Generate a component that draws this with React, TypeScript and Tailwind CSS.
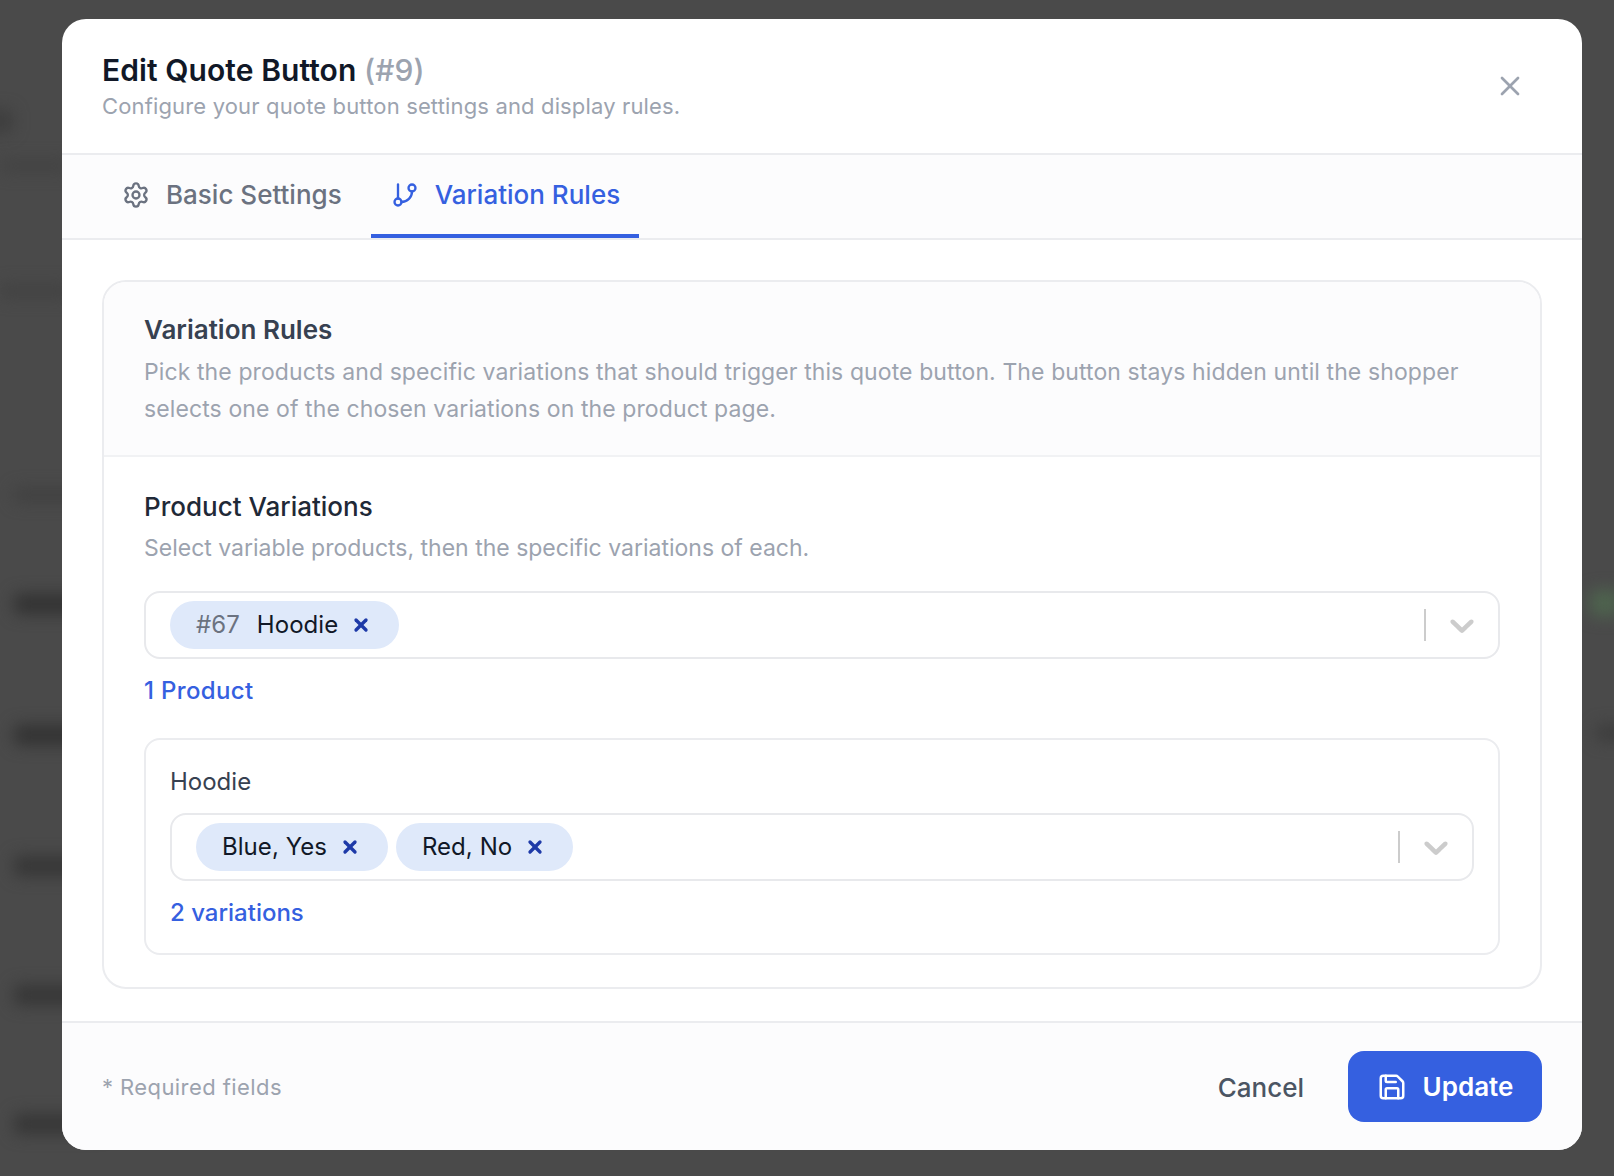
import { Settings, GitBranch, X, Save } from "lucide-react";

function Chevron() {
  return (
    <svg width="40" height="40" viewBox="0 0 20 20" fill="#cccccc" className="mx-[16px]">
      <path d="M4.516 7.548c0.436-0.446 1.043-0.481 1.576 0l3.908 3.747 3.908-3.747c0.533-0.481 1.141-0.446 1.574 0 0.436 0.445 0.408 1.197 0 1.615-0.406 0.418-4.695 4.502-4.695 4.502-0.217 0.223-0.502 0.335-0.787 0.335s-0.57-0.112-0.789-0.335c0 0-4.287-4.084-4.695-4.502s-0.436-1.17 0-1.615z" />
    </svg>
  );
}

function Tag({ children }: { children: React.ReactNode }) {
  return (
    <span className="flex h-[48px] items-center gap-[13px] rounded-full bg-[#dfe9fa] pl-[26px] pr-[28px] text-[24px] tracking-[0.05px] text-[#111827]">
      <span className="flex items-center gap-[17px]">{children}</span>
      <X size={20} strokeWidth={4} color="#1e3aa8" />
    </span>
  );
}

function MultiSelect({ children }: { children: React.ReactNode }) {
  return (
    <div className="flex h-[68px] items-center rounded-[16px] border-2 border-[#e8e9ec] bg-white pl-[24px]">
      <div className="flex flex-1 items-center gap-[8px]">{children}</div>
      <div className="h-[32px] w-[2px] bg-[#cccccc]" />
      <Chevron />
    </div>
  );
}

const streaks: string[] = [
  "top-[488px] left-[14px] w-[90px] h-[14px] bg-[#404040]",
  "top-[594px] left-[14px] w-[90px] h-[20px] bg-[#323232]",
  "top-[725px] left-[14px] w-[90px] h-[20px] bg-[#323232]",
  "top-[856px] left-[14px] w-[90px] h-[20px] bg-[#363636]",
  "top-[985px] left-[14px] w-[90px] h-[20px] bg-[#363636]",
  "top-[1114px] left-[14px] w-[90px] h-[20px] bg-[#363636]",
  "top-[110px] left-[-10px] w-[22px] h-[22px] bg-[#3c3c3c]",
  "top-[160px] left-[0px] w-[70px] h-[12px] bg-[#424242]",
  "top-[284px] left-[0px] w-[70px] h-[14px] bg-[#424242]",
  "top-[590px] left-[1590px] w-[30px] h-[26px] bg-[#4e644e]",
  "top-[725px] left-[1596px] w-[30px] h-[16px] bg-[#3c3c3c]",
];

export default function App() {
  return (
    <div className="relative h-[1176px] w-[1614px] overflow-hidden bg-[#4a4a4a] font-['Inter',sans-serif]">
      <div className="absolute inset-0">
        {streaks.map((c, i) => (
          <div key={i} className={`absolute rounded blur-[8px] ${c}`} />
        ))}
      </div>
      <div className="absolute left-[62px] top-[19px] flex h-[1131px] w-[1520px] flex-col overflow-hidden rounded-[24px] bg-white">
        <header className="flex h-[136px] shrink-0 items-center justify-between border-b-2 border-[#ebecef] pl-[40px] pr-[56px]">
          <div>
            <h1 className="text-[30px] font-semibold leading-[40px] tracking-[0.08px] text-[#111827]">
              Edit Quote Button <span className="font-medium text-[#9ca3af]">(#9)</span>
            </h1>
            <p className="text-[22px] leading-[32px] tracking-[0.15px] text-[#9ca3af]">Configure your quote button settings and display rules.</p>
          </div>
          <X size={32} strokeWidth={2} color="#9ca3af" />
        </header>
        <nav className="flex h-[85px] shrink-0 gap-[9px] border-b-2 border-[#ebecef] bg-[#fcfcfd] pl-[40px]">
          <div className="flex h-[83px] items-center gap-[16px] px-[20px] pb-[4px] text-[26px] font-medium text-[#6b7280]">
            <Settings size={28} strokeWidth={2} />
            Basic Settings
          </div>
          <div className="-mb-[2px] flex h-[83px] items-center gap-[16px] border-b-4 border-[#3560e0] pl-[20px] pr-[19px] text-[26px] font-medium text-[#3560e0]">
            <GitBranch size={28} strokeWidth={2} />
            Variation Rules
          </div>
        </nav>
        <main className="flex-1 px-[40px] pt-[40px]">
          <section className="overflow-hidden rounded-[24px] border-2 border-[#ebecef] bg-white">
            <div className="h-[175px] border-b-2 border-[#f1f2f4] bg-[#fcfcfd] px-[40px] pt-[30px]">
              <h2 className="text-[26px] font-semibold leading-[36px] text-[#374151]">Variation Rules</h2>
              <p className="mt-[6px] text-[23px] leading-[37px] tracking-[0.1px] text-[#9ca3af]">
                Pick the products and specific variations that should trigger this quote button. The button stays hidden until the shopper selects one of the chosen variations on the product page.
              </p>
            </div>
            <div className="px-[40px] pb-[32px] pt-[32px]">
              <h3 className="text-[26px] font-medium leading-[36px] text-[#1f2937]">Product Variations</h3>
              <p className="mt-[5px] text-[23px] leading-[36px] text-[#9ca3af]">Select variable products, then the specific variations of each.</p>
              <div className="mt-[25px]">
                <MultiSelect>
                  <Tag>
                    <span className="text-[#6b7280]">#67</span>
                    <span>Hoodie</span>
                  </Tag>
                </MultiSelect>
              </div>
              <p className="mt-[14px] text-[24px] font-medium leading-[36px] tracking-[0.35px] text-[#3560e0]">1 Product</p>
              <div className="mt-[29px] rounded-[16px] border-2 border-[#ebecef] px-[24px] pb-[22px] pt-[24px]">
                <p className="text-[24px] leading-[36px] text-[#374151]">Hoodie</p>
                <div className="mt-[13px]">
                  <MultiSelect>
                    <Tag>Blue, Yes</Tag>
                    <Tag>Red, No</Tag>
                  </MultiSelect>
                </div>
                <p className="mt-[14px] text-[24px] font-medium leading-[36px] text-[#3560e0]">2 variations</p>
              </div>
            </div>
          </section>
        </main>
        <footer className="flex h-[129px] shrink-0 items-center justify-between border-t-2 border-[#ebecef] bg-[#fcfcfd] px-[40px] pb-[1px]">
          <span className="mt-[2px] text-[22px] tracking-[0.42px] text-[#9ca3af]">* Required fields</span>
          <div className="flex items-center gap-[44px]">
            <span className="mt-[2px] text-[26px] font-medium text-[#4b5563]">Cancel</span>
            <button className="flex h-[71px] w-[194px] items-center justify-center gap-[16px] rounded-[16px] bg-[#3560e0] pt-[1px] text-[26px] font-semibold text-white">
              <Save size={30} strokeWidth={2} />
              Update
            </button>
          </div>
        </footer>
      </div>
    </div>
  );
}
